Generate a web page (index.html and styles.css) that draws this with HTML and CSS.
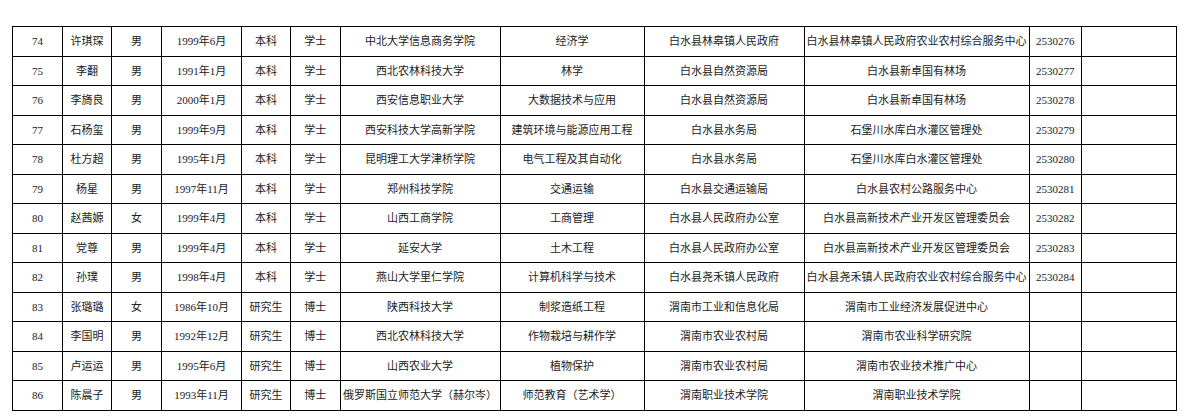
FILE: index.html
```html
<!DOCTYPE html>
<html lang="zh-CN">
<head>
<meta charset="utf-8">
<title>名单</title>
<link rel="stylesheet" href="styles.css">
</head>
<body>
<div class="page">
<table class="roster">
<colgroup>
<col class="c1"><col class="c2"><col class="c3"><col class="c4"><col class="c5"><col class="c6"><col class="c7"><col class="c8"><col class="c9"><col class="c10"><col class="c11"><col class="c12">
</colgroup>
<tbody>
<tr><td>74</td><td>许琪琛</td><td>男</td><td>1999年6月</td><td>本科</td><td>学士</td><td>中北大学信息商务学院</td><td>经济学</td><td>白水县林皋镇人民政府</td><td>白水县林皋镇人民政府农业农村综合服务中心</td><td>2530276</td><td></td></tr>
<tr><td>75</td><td>李翻</td><td>男</td><td>1991年1月</td><td>本科</td><td>学士</td><td>西北农林科技大学</td><td>林学</td><td>白水县自然资源局</td><td>白水县新卓国有林场</td><td>2530277</td><td></td></tr>
<tr><td>76</td><td>李旖良</td><td>男</td><td>2000年1月</td><td>本科</td><td>学士</td><td>西安信息职业大学</td><td>大数据技术与应用</td><td>白水县自然资源局</td><td>白水县新卓国有林场</td><td>2530278</td><td></td></tr>
<tr><td>77</td><td>石杨玺</td><td>男</td><td>1999年9月</td><td>本科</td><td>学士</td><td>西安科技大学高新学院</td><td>建筑环境与能源应用工程</td><td>白水县水务局</td><td>石堡川水库白水灌区管理处</td><td>2530279</td><td></td></tr>
<tr><td>78</td><td>杜方超</td><td>男</td><td>1995年1月</td><td>本科</td><td>学士</td><td>昆明理工大学津桥学院</td><td>电气工程及其自动化</td><td>白水县水务局</td><td>石堡川水库白水灌区管理处</td><td>2530280</td><td></td></tr>
<tr><td>79</td><td>杨星</td><td>男</td><td>1997年11月</td><td>本科</td><td>学士</td><td>郑州科技学院</td><td>交通运输</td><td>白水县交通运输局</td><td>白水县农村公路服务中心</td><td>2530281</td><td></td></tr>
<tr><td>80</td><td>赵茜嫄</td><td>女</td><td>1999年4月</td><td>本科</td><td>学士</td><td>山西工商学院</td><td>工商管理</td><td>白水县人民政府办公室</td><td>白水县高新技术产业开发区管理委员会</td><td>2530282</td><td></td></tr>
<tr><td>81</td><td>党尊</td><td>男</td><td>1999年4月</td><td>本科</td><td>学士</td><td>延安大学</td><td>土木工程</td><td>白水县人民政府办公室</td><td>白水县高新技术产业开发区管理委员会</td><td>2530283</td><td></td></tr>
<tr><td>82</td><td>孙璞</td><td>男</td><td>1998年4月</td><td>本科</td><td>学士</td><td>燕山大学里仁学院</td><td>计算机科学与技术</td><td>白水县尧禾镇人民政府</td><td>白水县尧禾镇人民政府农业农村综合服务中心</td><td>2530284</td><td></td></tr>
<tr><td>83</td><td>张璐璐</td><td>女</td><td>1986年10月</td><td>研究生</td><td>博士</td><td>陕西科技大学</td><td>制浆造纸工程</td><td>渭南市工业和信息化局</td><td>渭南市工业经济发展促进中心</td><td></td><td></td></tr>
<tr><td>84</td><td>李国明</td><td>男</td><td>1992年12月</td><td>研究生</td><td>博士</td><td>西北农林科技大学</td><td>作物栽培与耕作学</td><td>渭南市农业农村局</td><td>渭南市农业科学研究院</td><td></td><td></td></tr>
<tr><td>85</td><td>卢运运</td><td>男</td><td>1995年6月</td><td>研究生</td><td>博士</td><td>山西农业大学</td><td>植物保护</td><td>渭南市农业农村局</td><td>渭南市农业技术推广中心</td><td></td><td></td></tr>
<tr><td>86</td><td>陈晨子</td><td>男</td><td>1993年11月</td><td>研究生</td><td>博士</td><td>俄罗斯国立师范大学（赫尔岑）</td><td>师范教育（艺术学）</td><td>渭南职业技术学院</td><td>渭南职业技术学院</td><td></td><td></td></tr>
</tbody>
</table>
</div>
</body>
</html>
```

FILE: styles.css
```css
html, body {
  margin: 0;
  padding: 0;
  background: #ffffff;
}

.page {
  padding: 26px 0 0 12px;
}

.roster {
  border-collapse: collapse;
  table-layout: fixed;
  width: 1165px;
  font-family: "Liberation Serif", "Noto Sans CJK SC", serif;
  font-size: 11px;
  color: #222222;
}

.roster td {
  border: 1px solid #000000;
  height: 28.5px;
  padding: 0 1px;
  text-align: center;
  vertical-align: middle;
  white-space: nowrap;
  overflow: hidden;
  line-height: 14px;
}

.c1 { width: 50px; }
.c2 { width: 49px; }
.c3 { width: 50px; }
.c4 { width: 80px; }
.c5 { width: 49px; }
.c6 { width: 49.5px; }
.c7 { width: 160px; }
.c8 { width: 144px; }
.c9 { width: 160px; }
.c10 { width: 225px; }
.c11 { width: 52.5px; }
.c12 { width: 95px; }
```
